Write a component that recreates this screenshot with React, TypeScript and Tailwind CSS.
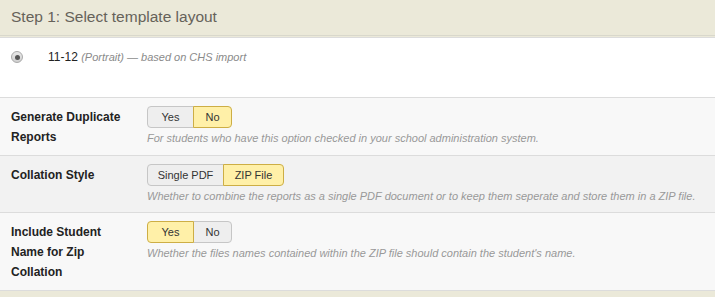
import React from 'react';

type Opt = { label: string; w: string; active?: boolean };

const Toggle = ({ options }: { options: Opt[] }) => (
  <div className="flex h-[22px]">
    {options.map((o, i) => {
      const first = i === 0;
      const last = i === options.length - 1;
      return (
        <span
          key={o.label}
          className={[
            'flex items-center justify-center border text-[11px] text-[#333]',
            o.w,
            o.active ? 'bg-[#fff0a8] border-[#cdae45] z-10' : 'bg-[#eeeeee] border-[#c6c6c6]',
            first ? 'rounded-l-[4px]' : '-ml-px',
            last ? 'rounded-r-[4px]' : '',
          ].join(' ')}
        >
          {o.label}
        </span>
      );
    })}
  </div>
);

const Row = ({
  label,
  options,
  desc,
  bg,
}: {
  label: React.ReactNode;
  options: Opt[];
  desc: string;
  bg: string;
}) => (
  <div className={`flex border-b border-[#dcdcdc] pt-2 pb-2 ${bg}`}>
    <div className="w-[147px] shrink-0 pl-[11px] pr-3 pt-px text-[12px] font-bold leading-[20px] text-[#222]">
      {label}
    </div>
    <div className="flex flex-col">
      <Toggle options={options} />
      <p className="mt-[2px] text-[11px] italic leading-[16px] text-[#999]">{desc}</p>
    </div>
  </div>
);

export default function App() {
  return (
    <div className="h-[297px] w-[715px] bg-[#ebe9d9] font-['Liberation_Sans',Arial,sans-serif]">
      <div className="flex h-[36px] items-center border-b border-[#d9d8cc] pl-[11px] pb-[2px] text-[15.5px] text-[#66625a]">
        Step 1: Select template layout
      </div>
      <div className="mt-px border-t border-[#dcdcdc]">
        <div className="flex h-[60px] items-start border-b border-[#dcdcdc] bg-white pt-[13px]">
          <span className="ml-[11px] flex h-[12px] w-[12px] items-center justify-center rounded-full border border-[#a9a9a9] bg-gradient-to-b from-[#e8e8e8] to-[#d0d0d0]">
            <span className="h-[5px] w-[5px] rounded-full bg-[#555]" />
          </span>
          <span className="ml-[25px] -mt-[1px] text-[12px] leading-[14px] text-[#222]">
            11-12 <em className="text-[11px] text-[#8a8a8a]">(Portrait) — based on CHS import</em>
          </span>
        </div>
        <Row
          bg="bg-[#f8f8f8]"
          label={
            <>
              Generate Duplicate
              <br />
              Reports
            </>
          }
          options={[
            { label: 'Yes', w: 'w-[47px]' },
            { label: 'No', w: 'w-[39px]', active: true },
          ]}
          desc="For students who have this option checked in your school administration system."
        />
        <Row
          bg="bg-[#f2f2f2]"
          label="Collation Style"
          options={[
            { label: 'Single PDF', w: 'w-[77px]' },
            { label: 'ZIP File', w: 'w-[61px]', active: true },
          ]}
          desc="Whether to combine the reports as a single PDF document or to keep them seperate and store them in a ZIP file."
        />
        <Row
          bg="bg-[#f8f8f8]"
          label={
            <>
              Include Student
              <br />
              Name for Zip
              <br />
              Collation
            </>
          }
          options={[
            { label: 'Yes', w: 'w-[47px]', active: true },
            { label: 'No', w: 'w-[39px]' },
          ]}
          desc="Whether the files names contained within the ZIP file should contain the student's name."
        />
      </div>
    </div>
  );
}
